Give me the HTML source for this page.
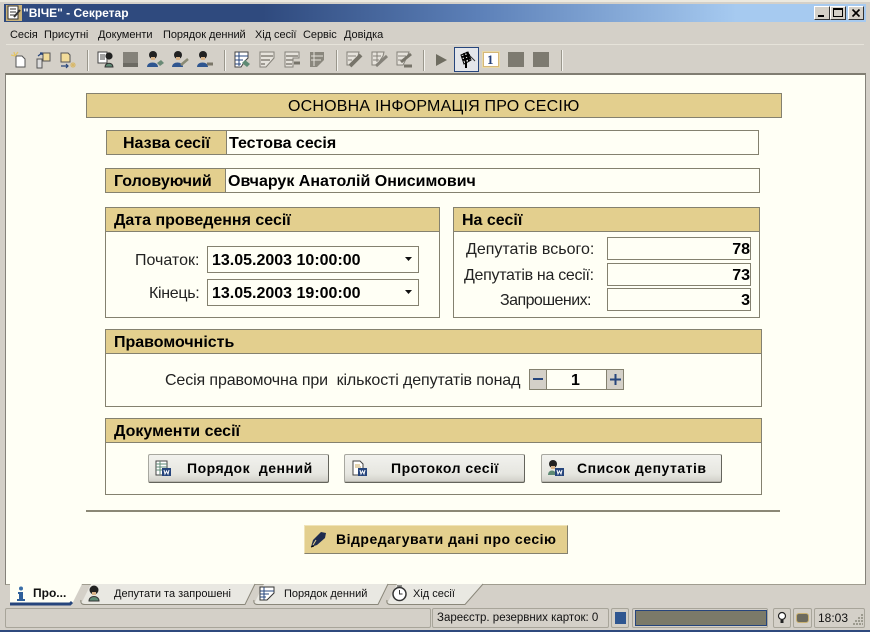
<!DOCTYPE html>
<html><head><meta charset="utf-8">
<style>
html,body{margin:0;padding:0}
body{width:870px;height:632px;position:relative;overflow:hidden;background:#d4d0c8;font-family:"Liberation Sans",sans-serif;color:#000}
.a,.a *{box-sizing:border-box}
.a{position:absolute}
.t{position:absolute;white-space:nowrap;line-height:1}
.box{position:absolute;border:1px solid #84816f;background:#fffff5;box-sizing:border-box}
.h{position:absolute;background:#e3cf8e;border:1px solid #84816f;box-sizing:border-box}
.b{font-weight:bold;font-size:16px}
.lbl{font-size:16px;color:#222;text-align:right}
.btn{position:absolute;box-sizing:border-box;border:1px solid #64645c;border-top-color:#a8a8a0;border-left-color:#a8a8a0;border-radius:2px;background:linear-gradient(#f2f2ee,#e6e6e0 70%,#d0cfc8);box-shadow:inset 0 -1px 0 #b8b7ae}
.bt{font-size:14px;letter-spacing:.5px;font-weight:bold}
svg{position:absolute;overflow:visible}
.sep{position:absolute;top:50px;width:2px;height:21px;background:#9a978c;border-right:1px solid #f4f3ee;box-sizing:border-box}
.m{position:absolute;top:30px;font-size:11px;line-height:11px;white-space:nowrap;color:#111;letter-spacing:-.05px}
.sb{position:absolute;top:608px;height:20px;border:1px solid #a8a59a;border-radius:2px;box-sizing:border-box;background:#d4d0c8}
.tab{position:absolute;font-size:11px;top:589px;line-height:11px;white-space:nowrap;color:#111}
</style></head><body>

<!-- window frame -->
<div class="a" style="left:0;top:0;width:870px;height:2px;background:#ece9df"></div>
<div class="a" style="left:4px;top:4px;width:862px;height:18px;background:linear-gradient(90deg,#2f4a7e 0,#2f4a7e 30%,#5c80b8 55%,#a6caf0 85%,#a6caf0 100%)"></div>
<div class="t" style="left:23px;top:7px;font-size:12px;font-weight:bold;color:#fff">"ВІЧЕ" - Секретар</div>
<!-- app icon -->
<svg style="left:6px;top:5px" width="16" height="16"><rect x="0" y="0" width="16" height="16" fill="#c9b27a"/><rect x="2" y="1" width="10" height="13" fill="#fff" stroke="#333"/><path d="M4 4h6M4 7h6M4 10h6" stroke="#333"/><path d="M8 12l6-7" stroke="#333" stroke-width="2"/></svg>
<!-- caption buttons -->
<div class="a" style="left:814px;top:6px;width:16px;height:14px;background:#d4d0c8;border:1px solid;border-color:#fff #333 #333 #fff"><div class="a" style="left:3px;top:8px;width:6px;height:2px;background:#000"></div></div>
<div class="a" style="left:830px;top:6px;width:16px;height:14px;background:#d4d0c8;border:1px solid;border-color:#fff #333 #333 #fff"><div class="a" style="left:2px;top:1px;width:10px;height:9px;border:1px solid #000;border-top-width:2px"></div></div>
<div class="a" style="left:848px;top:6px;width:16px;height:14px;background:#d4d0c8;border:1px solid;border-color:#fff #333 #333 #fff"><svg style="left:3px;top:2px" width="9" height="8"><path d="M0.5 0.5l7 7M7.5 0.5l-7 7" stroke="#000" stroke-width="1.6"/></svg></div>

<!-- menu -->
<div class="m" style="left:10px">Сесія</div>
<div class="m" style="left:44px">Присутні</div>
<div class="m" style="left:98px">Документи</div>
<div class="m" style="left:163px">Порядок денний</div>
<div class="m" style="left:255px">Хід сесії</div>
<div class="m" style="left:303px">Сервіс</div>
<div class="m" style="left:344px">Довідка</div>
<div class="a" style="left:6px;top:44px;width:858px;height:1px;background:#e6e3da"></div>

<!-- toolbar -->
<svg style="left:10px;top:50px" width="18" height="20"><path d="M6 6h6l3 3v8H6z" fill="#fff" stroke="#555"/><path d="M4 2l1 4M1 5l4 1M8 2L5 6" stroke="#e3c56a" stroke-width="1.3"/></svg>
<svg style="left:35px;top:50px" width="18" height="20"><path d="M8 3h7v8H8z" fill="#f2dc9a" stroke="#555"/><path d="M2 9h5v9H2z" fill="#ddd" stroke="#555"/><path d="M3 6l4-3M5 3h2v2" stroke="#26457c" fill="none" stroke-width="1.2"/></svg>
<svg style="left:59px;top:50px" width="18" height="20"><path d="M2 3h7l2 2v7H2z" fill="#f2dc9a" stroke="#555"/><path d="M2 16h7M7 14l2 2-2 2" stroke="#26457c" fill="none" stroke-width="1.2"/><path d="M14 12v6M11 15h6M12 13l4 4M16 13l-4 4" stroke="#d8b868"/></svg>
<div class="sep" style="left:87px"></div>
<svg style="left:97px;top:50px" width="18" height="20"><path d="M1 2h9v11H1z" fill="#fff" stroke="#444"/><path d="M3 5h5M3 7h5M3 9h5" stroke="#444"/><circle cx="12" cy="6" r="3.6" fill="#222"/><path d="M8 17c0-5 8-5 8 0z" fill="#5e8a74" stroke="#333"/></svg>
<svg style="left:122px;top:51px" width="17" height="18"><rect x="1" y="1" width="15" height="14" fill="#85827a"/><path d="M1 12h15v4H1z" fill="#6c6a62"/></svg>
<svg style="left:146px;top:50px" width="18" height="20"><circle cx="7" cy="5" r="4" fill="#222"/><rect x="5" y="7" width="4" height="3" fill="#d9b48a"/><path d="M1 17c0-6 11-6 11 0z" fill="#2f5690"/><path d="M11 13l4-3 3 3-4 3z" fill="#6a8a76"/></svg>
<svg style="left:171px;top:50px" width="18" height="20"><circle cx="7" cy="5" r="4" fill="#222"/><rect x="5" y="7" width="4" height="3" fill="#d9b48a"/><path d="M1 17c0-6 11-6 11 0z" fill="#2f5690"/><path d="M10 15l7-6" stroke="#8a8a74" stroke-width="2.5"/></svg>
<svg style="left:196px;top:50px" width="18" height="20"><circle cx="7" cy="5" r="4" fill="#222"/><rect x="5" y="7" width="4" height="3" fill="#d9b48a"/><path d="M1 17c0-6 11-6 11 0z" fill="#2f5690"/><path d="M11 14h6" stroke="#7a7668" stroke-width="3"/></svg>
<div class="sep" style="left:224px"></div>
<svg style="left:234px;top:51px" width="17" height="18"><path d="M1 1h13v6l-3 3-4 6H1z" fill="#fff" stroke="#444"/><path d="M1 5h13M1 9h8M1 13h6M5 1v14" stroke="#26457c"/><path d="M8 12l3-3 5 4-3 3z" fill="#5e8a74"/></svg>
<svg style="left:259px;top:51px" width="17" height="18"><path d="M1 1h14v6l-8 9H1z" fill="#e6e3dc" stroke="#85827a"/><path d="M2 5h12M2 9h9M2 13h4" stroke="#85827a" stroke-width="1.5"/></svg>
<svg style="left:284px;top:51px" width="17" height="18"><path d="M1 1h14v6H9v9H1z" fill="#e6e3dc" stroke="#85827a"/><path d="M2 5h12M2 9h7M2 13h6" stroke="#85827a" stroke-width="1.5"/><path d="M10 12h6" stroke="#77746a" stroke-width="3"/></svg>
<svg style="left:309px;top:51px" width="17" height="18"><path d="M1 1h14v8l-7 7H1z" fill="#8a877d"/><path d="M2 5h12M2 9h10M5 1v14" stroke="#e6e3dc"/></svg>
<div class="sep" style="left:336px"></div>
<svg style="left:346px;top:51px" width="17" height="18"><path d="M1 1h12l-1 4-6 9H1z" fill="#e6e3dc" stroke="#85827a"/><path d="M4 15L15 4" stroke="#77746a" stroke-width="4"/><path d="M2 5h8M2 9h4" stroke="#85827a"/></svg>
<svg style="left:371px;top:51px" width="17" height="18"><path d="M1 1h12l-1 4-6 9H1z" fill="#e6e3dc" stroke="#85827a"/><path d="M5 15L16 5" stroke="#85827a" stroke-width="3"/><path d="M2 5h8M2 9h6M6 1v10" stroke="#85827a"/></svg>
<svg style="left:396px;top:51px" width="17" height="18"><path d="M1 1h12l-2 5-4 8H1z" fill="#e6e3dc" stroke="#85827a"/><path d="M5 11L15 3" stroke="#77746a" stroke-width="3"/><path d="M8 15h8" stroke="#77746a" stroke-width="3"/><path d="M2 5h8M2 9h4" stroke="#85827a"/></svg>
<div class="sep" style="left:423px"></div>
<svg style="left:435px;top:53px" width="13" height="14"><path d="M1 1l11 6-11 6z" fill="#6f6d61"/></svg>
<div class="a" style="left:454px;top:47px;width:25px;height:25px;border:1px solid #26457c;background:#e4e6ea"></div>
<svg style="left:458px;top:50px" width="18" height="20"><path d="M8 2l9 9" stroke="#333"/><path d="M3 5l7-3 3 8-7 4z" fill="#fff" stroke="#000"/><path d="M4 7l8-2M5 10l7-2M6 3l2 10M9 2l2 9" stroke="#000" stroke-width="2"/><path d="M8 13v5" stroke="#000" stroke-width="2"/></svg>
<div class="a" style="left:483px;top:52px;width:16px;height:15px;background:#fff;border:1px solid #d6b878;outline:1px solid #e8d9a8"></div>
<div class="t" style="left:487px;top:53px;font-size:13px;font-weight:bold;font-family:'Liberation Serif',serif;color:#24407a">1</div>
<div class="a" style="left:508px;top:52px;width:16px;height:15px;background:#7d7a70"></div>
<div class="a" style="left:533px;top:52px;width:16px;height:15px;background:#7d7a70"></div>
<div class="sep" style="left:561px"></div>

<!-- content -->
<div class="a" style="left:5px;top:73px;width:861px;height:512px;background:#fffff5;border:1px solid #85827a;border-top:2px solid #807d72;border-bottom:1px solid #a09d90"></div>

<div class="h" style="left:86px;top:93px;width:696px;height:25px"></div>
<div class="t" style="left:288px;top:99px;font-size:16px;letter-spacing:.2px">ОСНОВНА ІНФОРМАЦІЯ ПРО СЕСІЮ</div>

<div class="box" style="left:106px;top:130px;width:653px;height:25px"></div>
<div class="h" style="left:106px;top:130px;width:121px;height:25px"></div>
<div class="t b" style="left:123px;top:136px">Назва сесії</div>
<div class="t b" style="left:229px;top:136px">Тестова сесія</div>

<div class="box" style="left:105px;top:168px;width:655px;height:25px"></div>
<div class="h" style="left:105px;top:168px;width:121px;height:25px"></div>
<div class="t b" style="left:114px;top:174px">Головуючий</div>
<div class="t b" style="left:228px;top:174px">Овчарук Анатолій Онисимович</div>

<!-- date panel -->
<div class="box" style="left:105px;top:207px;width:335px;height:111px"></div>
<div class="h" style="left:105px;top:207px;width:335px;height:25px"></div>
<div class="t b" style="left:114px;top:213px">Дата проведення сесії</div>
<div class="t lbl" style="left:135px;top:253px">Початок:</div>
<div class="t lbl" style="left:149px;top:286px;letter-spacing:-.3px">Кінець:</div>
<div class="box" style="left:207px;top:246px;width:212px;height:27px"></div>
<div class="t b" style="left:212px;top:253px">13.05.2003 10:00:00</div>
<div class="box" style="left:207px;top:279px;width:212px;height:27px"></div>
<div class="t b" style="left:212px;top:286px">13.05.2003 19:00:00</div>
<svg style="left:405px;top:257px" width="8" height="4"><path d="M0 0h7L3.5 4z" fill="#111"/></svg>
<svg style="left:405px;top:290px" width="8" height="4"><path d="M0 0h7L3.5 4z" fill="#111"/></svg>

<!-- session panel -->
<div class="box" style="left:453px;top:207px;width:307px;height:111px"></div>
<div class="h" style="left:453px;top:207px;width:307px;height:25px"></div>
<div class="t b" style="left:462px;top:213px">На сесії</div>
<div class="t lbl" style="left:466px;top:242px">Депутатів всього:</div>
<div class="t lbl" style="left:464px;top:268px;letter-spacing:-.3px">Депутатів на сесії:</div>
<div class="t lbl" style="left:500px;top:293px;letter-spacing:-.55px">Запрошених:</div>
<div class="box" style="left:607px;top:237px;width:144px;height:23px"></div>
<div class="box" style="left:607px;top:263px;width:144px;height:23px"></div>
<div class="box" style="left:607px;top:288px;width:144px;height:23px"></div>
<div class="t b" style="right:120px;top:242px">78</div>
<div class="t b" style="right:120px;top:268px">73</div>
<div class="t b" style="right:120px;top:293px">3</div>

<!-- quorum -->
<div class="box" style="left:105px;top:329px;width:657px;height:78px"></div>
<div class="h" style="left:105px;top:329px;width:657px;height:25px"></div>
<div class="t b" style="left:114px;top:335px">Правомочність</div>
<div class="t lbl" style="left:165px;top:373px;white-space:pre;letter-spacing:-.12px">Сесія правомочна при  кількості депутатів понад</div>
<div class="box" style="left:529px;top:369px;width:95px;height:21px"></div>
<div class="a" style="left:529px;top:369px;width:18px;height:21px;background:#d4d0c8;border:1px solid #84816f"></div>
<div class="a" style="left:606px;top:369px;width:18px;height:21px;background:#d4d0c8;border:1px solid #84816f"></div>
<div class="a" style="left:533px;top:378px;width:10px;height:2px;background:#26457c"></div>
<svg style="left:610px;top:374px" width="11" height="11"><path d="M0 5.5h11M5.500 0v11" stroke="#26457c" stroke-width="2"/></svg>
<div class="t b" style="left:571px;top:373px">1</div>

<!-- docs -->
<div class="box" style="left:105px;top:418px;width:657px;height:77px"></div>
<div class="h" style="left:105px;top:418px;width:657px;height:25px"></div>
<div class="t b" style="left:114px;top:424px">Документи сесії</div>

<div class="btn" style="left:148px;top:454px;width:181px;height:29px"></div>
<div class="btn" style="left:344px;top:454px;width:181px;height:29px"></div>
<div class="btn" style="left:541px;top:454px;width:181px;height:29px"></div>
<svg style="left:155px;top:460px" width="17" height="17"><path d="M1 1h11v14H1z" fill="#fff" stroke="#444"/><path d="M1 4h11M1 7h11M1 10h11M5 1v14" stroke="#5e8a74"/><rect x="7" y="8" width="9" height="8" fill="#26457c"/><path d="M9 10l1 4 1.500-3 1.500 3 1-4" stroke="#fff" fill="none"/></svg>
<svg style="left:351px;top:460px" width="17" height="17"><path d="M2 1h7l3 3v11H2z" fill="#fff" stroke="#444"/><path d="M4 5h5M4 7h6" stroke="#c9a860"/><rect x="7" y="8" width="9" height="8" fill="#26457c"/><path d="M9 10l1 4 1.500-3 1.500 3 1-4" stroke="#fff" fill="none"/></svg>
<svg style="left:547px;top:459px" width="18" height="18"><circle cx="6" cy="5" r="4" fill="#222"/><rect x="4" y="7" width="4" height="3" fill="#d9b48a"/><path d="M1 16c0-6 8-6 8 0z" fill="#5e8a74"/><rect x="8" y="9" width="9" height="8" fill="#26457c"/><path d="M10 11l1 4 1.500-3 1.500 3 1-4" stroke="#fff" fill="none"/></svg>
<div class="t bt" style="left:187px;top:461px;white-space:pre">Порядок  денний</div>
<div class="t bt" style="left:391px;top:461px">Протокол сесії</div>
<div class="t bt" style="left:577px;top:461px">Список депутатів</div>

<div class="a" style="left:86px;top:510px;width:694px;height:2px;background:#8b8876"></div>

<div class="a" style="left:304px;top:525px;width:264px;height:29px;background:#e3cf8e;border:1px solid;border-color:#f0e4b8 #84816f #84816f #f0e4b8"></div>
<svg style="left:310px;top:530px" width="18" height="18"><path d="M1 17l2-7 8-8 5 1-1 5-8 7z" fill="#1f2c4e"/><path d="M3 15l3-5" stroke="#e3cf8e"/><path d="M1 17l3-1" stroke="#000"/></svg>
<div class="t bt" style="left:336px;top:532px">Відредагувати дані про сесію</div>

<!-- tabs -->
<div class="a" style="left:6px;top:585px;width:860px;height:22px;background:#d4d0c8"></div>
<svg style="left:0;top:584px" width="490" height="22">
  <path d="M10 0H82L72 20H10z" fill="#fffff5"/>
  <path d="M10 20H70L72 18" stroke="#26457c" stroke-width="3" fill="none"/>
  <path d="M81 20L91 0H255L245 20Q160 21 85 21z" fill="#e9e8e2"/>
  <path d="M81 16Q80 20.500 85 20.500H245L255 0" stroke="#8a877a" fill="none"/>
  <path d="M254 20L264 0H388L378 20Q300 21 258 21z" fill="#e9e8e2"/>
  <path d="M254 16Q253 20.500 258 20.500H378L388 0" stroke="#8a877a" fill="none"/>
  <path d="M387 20L397 0H483L465 20Q430 21 391 21z" fill="#e9e8e2"/>
  <path d="M387 16Q386 20.500 391 20.500H465L483 0" stroke="#8a877a" fill="none"/>
</svg>
<svg style="left:15px;top:586px" width="12" height="16"><circle cx="6" cy="2.500" r="2" fill="#3a6ea8"/><path d="M3 6h5v7h2v2H2v-2h2V8H3z" fill="#2f5f9a"/></svg>
<div class="tab" style="left:33px;top:588px;font-size:12px;font-weight:bold">Про...</div>
<svg style="left:87px;top:585px" width="14" height="17"><circle cx="7" cy="5" r="4.500" fill="#222"/><rect x="5" y="7" width="4" height="3" fill="#d9b48a"/><path d="M2 16c0-6 10-6 10 0z" fill="#5e8a74" stroke="#333"/></svg>
<div class="tab" style="left:114px">Депутати та запрошені</div>
<svg style="left:259px;top:586px" width="17" height="16"><path d="M1 1h14v6l-7 7H1z" fill="#fff" stroke="#333"/><path d="M1 5h14M1 8h9M1 11h6M5 1v13" stroke="#26457c"/></svg>
<div class="tab" style="left:284px">Порядок денний</div>
<svg style="left:391px;top:585px" width="17" height="17"><circle cx="8.500" cy="9" r="6.500" fill="#fff" stroke="#333" stroke-width="1.500"/><path d="M8.500 5v4h3M6 1h5" stroke="#333" fill="none"/></svg>
<div class="tab" style="left:413px">Хід сесії</div>

<!-- status -->
<div class="sb" style="left:5px;width:426px"></div>
<div class="sb" style="left:432px;width:177px"></div>
<div class="t" style="left:437px;top:613px;font-size:11.500px;color:#111">Зареєстр. резервних карток: 0</div>
<div class="sb" style="left:611px;width:18px"></div>
<div class="a" style="left:615px;top:612px;width:11px;height:12px;background:#2f5690"></div>
<div class="sb" style="left:632px;width:136px"></div>
<div class="a" style="left:635px;top:610px;width:132px;height:16px;background:#7b7a69;border:1px solid #26457c"></div>
<div class="sb" style="left:773px;width:18px"></div>
<svg style="left:777px;top:611px" width="10" height="14"><circle cx="5" cy="5" r="3.500" fill="#fff" stroke="#222" stroke-width="1.200"/><path d="M3.500 9h3v3h-3z" fill="#222"/></svg>
<div class="sb" style="left:793px;width:19px"></div>
<div class="a" style="left:796px;top:613px;width:13px;height:10px;background:#6c6a5e;border-radius:3px;border:1px solid #c8b070"></div>
<div class="sb" style="left:814px;width:51px"></div>
<div class="t" style="left:818px;top:612px;font-size:12px;color:#111">18:03</div>
<svg style="left:852px;top:614px" width="12" height="12"><path d="M9 1h2M6 4h2M9 4h2M3 7h2M6 7h2M9 7h2M1 10h2M4 10h2M7 10h2M10 10h1" stroke="#8a877a" stroke-width="1.500"/></svg>
<div class="a" style="left:0;top:630px;width:870px;height:2px;background:#2f4a7e"></div>
</body></html>
